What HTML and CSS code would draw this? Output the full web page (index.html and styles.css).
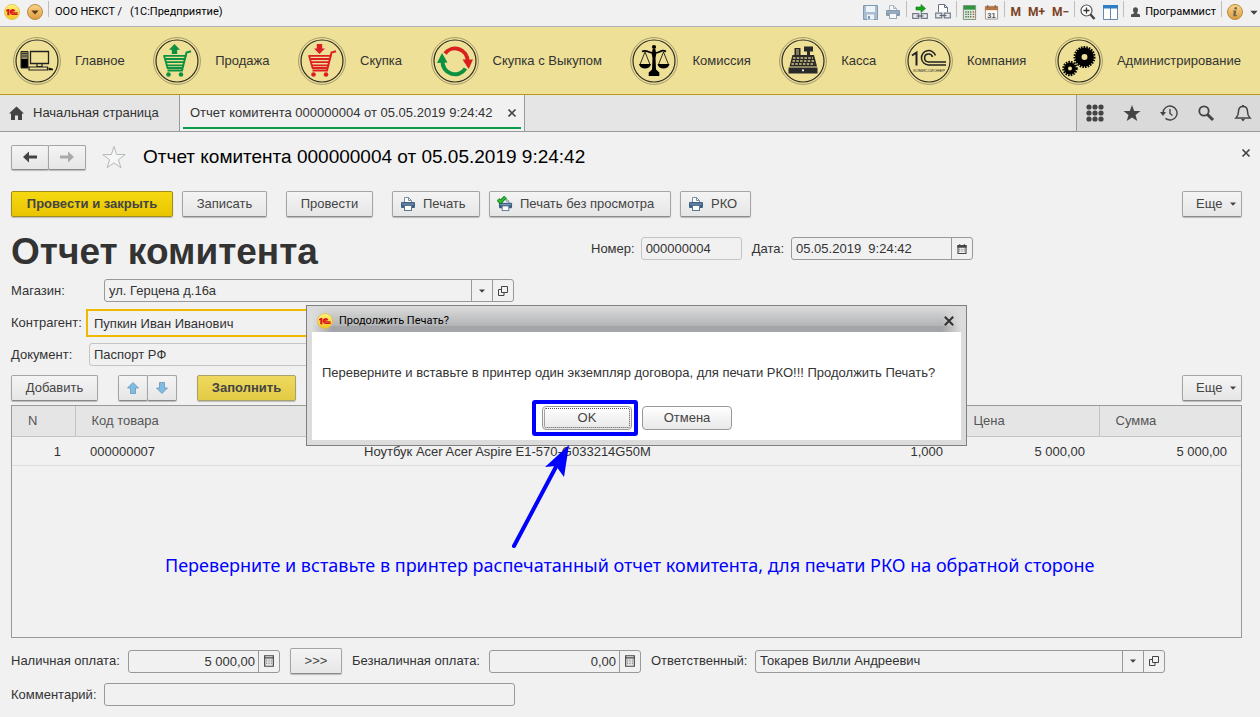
FILE: index.html
```html
<!DOCTYPE html>
<html lang="ru">
<head>
<meta charset="utf-8">
<meta name="viewport" content="width=device-width, initial-scale=1">
<title>ООО НЕКСТ / (1С:Предприятие)</title>
<link rel="stylesheet" href="styles.css">
</head>
<body>
<svg class="defs" aria-hidden="true">
  <defs>
    <linearGradient id="g-yellow" x1="0" y1="0" x2="0" y2="1"><stop offset="0" stop-color="#fff27a"/><stop offset="1" stop-color="#f3c623"/></linearGradient>
    <linearGradient id="g-orange" x1="0" y1="0" x2="0" y2="1"><stop offset="0" stop-color="#fbd58c"/><stop offset="1" stop-color="#dd9a3d"/></linearGradient>
    <symbol id="logo" viewBox="0 0 16 16">
      <circle cx="8" cy="8" r="7.6" fill="url(#g-yellow)" stroke="#dcb84a" stroke-width=".7"/>
      <path d="M2 6.3 3.8 5h1.600v6.200H3.300V7L2 7.600z" fill="#d8141c"/>
      <path d="M10.800 7.200A2.300 2.300 0 1 0 8.600 10.300H13.600M9.700 7.500a1 1 0 1 0-1 1.300h4.900" fill="none" stroke="#d8141c" stroke-width="1.300"/>
    </symbol>
    <symbol id="ring" viewBox="0 0 48 48">
      <circle cx="24" cy="24" r="23.400" fill="none" stroke="#8f8865" stroke-width=".8"/>
      <circle cx="24" cy="24" r="21" fill="none" stroke="#2e2c22" stroke-width="1.200"/>
    </symbol>
    <symbol id="cart" viewBox="0 0 48 48">
      <path d="M38 14.200 33.500 15.500 29 33.500H14.500" fill="none" stroke="currentColor" stroke-width="2"/>
      <path d="M10.500 18.800H33.500M11.500 22H32.500M12.500 25.200H31.500M13.500 28.400H30.500M11 18.500 14.600 31H30" fill="none" stroke="currentColor" stroke-width="1.800"/>
      <circle cx="15.500" cy="37.500" r="2.300" fill="currentColor"/><circle cx="28" cy="37.500" r="2.300" fill="currentColor"/>
    </symbol>
    <symbol id="printer" viewBox="0 0 16 16">
      <path d="M4.500 6.500v-5h4l3 3v2M8.500 1.500v3h3" fill="#fff" stroke="#7c8f9f"/>
      <rect x="1" y="6" width="14" height="6" rx="1" fill="#3f6184"/>
      <path d="M2 8h12" stroke="#7e9dba"/>
      <rect x="4.500" y="9.500" width="7" height="5" fill="#fff" stroke="#5b7690"/>
    </symbol>
    <symbol id="calc" viewBox="0 0 11 13">
      <path d="M.75.75h9.500v11.500H.75zM.75 3h9.500" fill="none" stroke="#444" stroke-width="1.300"/>
      <path d="M2.500 5.500h6M2.500 7.500h6M2.500 9.500h6" stroke="#444" stroke-dasharray="1 1.500"/>
    </symbol>
    <symbol id="caret" viewBox="0 0 6 4"><path d="M0 .5h6L3 3.800z" fill="#444"/></symbol>
    <symbol id="popout" viewBox="0 0 10 10"><path d="M3.500.5h6v6h-6zM3 3.500H.5v6h5.500V7" fill="none" stroke="#444"/></symbol>
    <symbol id="cross" viewBox="0 0 10 10"><path d="m1.500 1.500 7 7m0-7-7 7" stroke="currentColor" stroke-width="1.700"/></symbol>
  </defs>
</svg>

<header class="titlebar">
  <svg class="i16" role="img" aria-label="1С"><use href="#logo"/></svg>
  <button class="plain menu-btn" type="button" aria-label="Меню">
    <svg class="i16" viewBox="0 0 16 16"><circle cx="8" cy="8" r="7.500" fill="url(#g-orange)" stroke="#b88a45"/><path d="M4.300 6.500h7.400L8 10.500z" fill="#5c3b14"/></svg>
  </button>
  <span class="sep"></span>
  <span class="app-title"><span>ООО НЕКСТ /</span><span>(1С:Предприятие)</span></span>
  <div class="tools">
    <button class="plain" type="button" aria-label="Сохранить"><svg class="i15" viewBox="0 0 15 15"><path d="M.5.500h14v14H.500z" fill="#a9bed1" stroke="#7f9ab3"/><path d="M3 1h9v6H3zM4 9.500h7v5H4z" fill="#eef3f7"/><path d="M5 11h2v3H5z" fill="#7f9ab3"/></svg></button>
    <button class="plain faded" type="button" aria-label="Печать"><svg class="i16"><use href="#printer"/></svg></button>
    <span class="sep"></span>
    <button class="plain" type="button" aria-label="Получить ссылку"><svg class="i16" viewBox="0 0 16 16"><path d="M4 3h5V.5L13.500 4.500 9 8.500V6H4z" fill="#18a51e" stroke="#0c7412" stroke-width=".6"/><path d="M.7 9.700h6v4.600h-6zM9.300 9.700h6v4.600h-6z" fill="#eee" stroke="#727c87" stroke-width="1.200"/><path d="M4.500 12h7" stroke="#5f6b78" stroke-width="1.300"/></svg></button>
    <button class="plain" type="button" aria-label="Перейти по ссылке"><svg class="i16" viewBox="0 0 16 16"><path d="M3.500 8V.5h6l3 3V8M9.500.5v3h3" fill="#fff" stroke="#66727f"/><path d="M.7 9.200h6v4.600h-6zM9.300 9.200h6v4.600h-6z" fill="#eee" stroke="#727c87" stroke-width="1.200"/><path d="M4.500 11.500h7" stroke="#5f6b78" stroke-width="1.300"/></svg></button>
    <span class="sep"></span>
    <button class="plain" type="button" aria-label="Калькулятор"><svg class="i15" viewBox="0 0 15 16"><path d="M1 .5h13v15H1z" fill="#dfe8df" stroke="#789078"/><path d="M1.500 1h12v4h-12z" fill="#2f9440"/><path d="M3 7.500h7M3 10h7M3 12.500h7" stroke="#467d4b" stroke-width="1.500" stroke-dasharray="1.500 1"/><path d="M11 7.500h1.500M11 10h1.500M11 12.500h1.500" stroke="#c94e35" stroke-width="1.500"/></svg></button>
    <button class="plain" type="button" aria-label="Календарь"><svg class="i15" viewBox="0 0 15 16"><path d="M1 1.500h13v13.500H1z" fill="#fafafa" stroke="#9d9087"/><path d="M.5 1.500h14v4H.5z" fill="#b77643"/><path d="M3.500 0v3M11.500 0v3" stroke="#765036"/><text x="7.500" y="13.500" class="cal-num">31</text></svg></button>
    <span class="sep"></span>
    <button class="plain mem" type="button">M</button>
    <button class="plain mem" type="button">M+</button>
    <button class="plain mem" type="button">M−</button>
    <span class="sep"></span>
    <button class="plain" type="button" aria-label="Масштаб"><svg class="i16" viewBox="0 0 16 16"><circle cx="6.500" cy="6.500" r="5.500" fill="#fff" stroke="#555" stroke-width="1.200"/><path d="M3.500 6.500h6m-3-3v6" stroke="#333" stroke-width="1.300"/><path d="m10.500 10.500 4 4.500" stroke="#444" stroke-width="2.500"/></svg></button>
    <button class="plain" type="button" aria-label="Панели"><svg class="i15" viewBox="0 0 15 15"><path d="M.5.500h14v14H.500zM7.500 1v14" fill="#fff" stroke="#6888a5"/><path d="M0 0h15v3.500H0z" fill="#2f7fc4"/></svg></button>
    <span class="sep"></span>
    <button class="plain user" type="button"><svg class="i11" viewBox="0 0 11 12"><path d="M3 4a2.500 2.800 0 0 1 5 0c0 1.800-1 2.200-1 3.500l3 1V11H1V8.500L4 7.500C4 6.200 3 5.800 3 4z" fill="#505050"/></svg>Программист</button>
    <span class="sep"></span>
    <button class="plain" type="button" aria-label="Информация"><svg class="i16" viewBox="0 0 16 16"><circle cx="8" cy="8" r="7.500" fill="url(#g-orange)" stroke="#b88a45"/><circle cx="8.700" cy="4.200" r="1.300" fill="#6b6658"/><path d="M6.300 6.500h3L8.600 11h1.200v1.300H6.300V11l.5-3.300h-.7z" fill="#6b6658"/></svg></button>
    <button class="plain more-tools" type="button" aria-label="Ещё"><svg class="car7" viewBox="0 0 6 4"><use href="#caret"/></svg></button>
  </div>
</header>

<nav class="sections">
  <a href="#"><svg class="i48" viewBox="0 0 48 48"><use href="#ring"/><path d="M8 14.500h7V31H8z" fill="#8e875c"/><path d="M8 22h7v9H8z" fill="#000"/><path d="M8 14.500h7V31H8z" fill="none" stroke="#222"/><path d="M9 16.500h5M9 19h5" stroke="#333"/><path d="M17.500 14.500h18v12h-18z" fill="none" stroke="#222" stroke-width="1.300"/><path d="M24 27v2.500h5V27M16 30h18.500v3H16z" fill="none" stroke="#222" stroke-width="1.200"/><path d="m35.500 30.500 4.500 1.200v1.600h-4.500z" fill="#111"/></svg>Главное</a>
  <a href="#"><svg class="i48 green" viewBox="0 0 48 48"><use href="#ring"/><path d="m21.500 7 5.500 5.800h-2.800v4.200h-5.400v-4.200H16z" fill="currentColor"/><use href="#cart"/></svg>Продажа</a>
  <a href="#"><svg class="i48 red" viewBox="0 0 48 48"><use href="#ring"/><path d="m21.500 17 5.500-5.600h-2.800V7h-5.400v4.400H16z" fill="currentColor"/><use href="#cart"/></svg>Скупка</a>
  <a href="#"><svg class="i48" viewBox="0 0 48 48"><use href="#ring"/><path d="M14 16.500A12.500 12.500 0 0 1 36.500 24" fill="none" stroke="#d8201f" stroke-width="4"/><path d="m31.500 22.500 10.500 0-4.300 9.500z" fill="#d8201f"/><path d="M34.500 31.500A12.500 12.500 0 0 1 11.500 24" fill="none" stroke="#0c9140" stroke-width="4"/><path d="m6 26 10.500-.5L11 16z" fill="#0c9140"/></svg>Скупка с Выкупом</a>
  <a href="#"><svg class="i48" viewBox="0 0 48 48"><use href="#ring"/><circle cx="24" cy="10" r="2.100"/><path d="M22.700 12h2.600l1 5-.8 4 .5 11.500 3.300 3v3.500H18.700V35.500l3.300-3 .5-11.500-.8-4z"/><path d="M12 14.500c3-1.500 5-.5 7 .5s7 1.500 10 0 4-2 7-.5" fill="none" stroke="#000" stroke-width="1.800"/><path d="M15 15 10 27.500M15 15l5 12.500M33.500 15l-5 12.500M33.500 15l5 12.500" stroke="#000" stroke-width=".8"/><path d="M9 27h12c-1 6-11 6-12 0zM27.500 27h12c-1 6-11 6-12 0z"/></svg>Комиссия</a>
  <a href="#"><svg class="i48" viewBox="0 0 48 48"><use href="#ring"/><path d="M9.500 30.500h29V36.500h-29z" fill="#292929"/><path d="m13.500 18 21.500 0 3 11.500H10.500z" fill="#292929"/><path d="M25 9.500h9v5h-3v4h-3v-4h-3zM15.500 11h6v8h-6z" fill="#292929"/><path d="M17 13h3M17 15h3M17 17h3" stroke="#eee096" stroke-width=".9"/><path d="M14 21h20M13.500 24h21.500M12.500 27h23" stroke="#d7ca87" stroke-width="1.300" stroke-dasharray="2.500 1.300"/><circle cx="24" cy="33.300" r="1.100" fill="#eee"/></svg>Касса</a>
  <a href="#"><svg class="i48" viewBox="0 0 48 48"><use href="#ring"/><path d="m7 18.500 4.500-3v13" fill="none" stroke="#222" stroke-width="2"/><path d="M30.500 18.500A7.200 7.200 0 1 0 23.500 28H41M27.500 20a4 4 0 1 0-4 5H41" fill="none" stroke="#222" stroke-width="1.500"/><text x="24" y="35" class="tiny">КОМИССИОНЕР</text></svg>Компания</a>
  <a href="#"><svg class="i48" viewBox="0 0 48 48"><use href="#ring"/><circle cx="29.500" cy="20" r="10" fill="none" stroke="#000" stroke-width="2" stroke-dasharray="1.600 1.100"/><circle cx="29.500" cy="20" r="6.200" fill="none" stroke="#000" stroke-width="6.500"/><circle cx="15" cy="31.500" r="6.700" fill="none" stroke="#000" stroke-width="2" stroke-dasharray="1.600 1.100"/><circle cx="15" cy="31.500" r="4" fill="none" stroke="#000" stroke-width="4"/></svg>Администрирование</a>
</nav>

<div class="tabs">
  <a class="tab home" href="#"><svg class="i15" viewBox="0 0 15 14"><path d="M7.500 0 15 7h-2v6.500H9V9H6v4.500H2V7H0z" fill="#444"/></svg>Начальная страница</a>
  <div class="tab active"><a href="#">Отчет комитента 000000004 от 05.05.2019 9:24:42</a><button class="plain" type="button" aria-label="Закрыть вкладку"><svg class="i10"><use href="#cross"/></svg></button></div>
  <div class="tab-tools">
    <button class="plain" type="button" aria-label="Функции"><svg class="i18" viewBox="0 0 18 18" fill="#444"><circle cx="3" cy="3" r="2.600"/><circle cx="9" cy="3" r="2.600"/><circle cx="15" cy="3" r="2.600"/><circle cx="3" cy="9" r="2.600"/><circle cx="9" cy="9" r="2.600"/><circle cx="15" cy="9" r="2.600"/><circle cx="3" cy="15" r="2.600"/><circle cx="9" cy="15" r="2.600"/><circle cx="15" cy="15" r="2.600"/></svg></button>
    <button class="plain" type="button" aria-label="Избранное"><svg class="i18" viewBox="0 0 18 18"><path d="m9 1 2.200 5.900 6.300.2-5 3.900 1.800 6.100L9 13.600l-5.300 3.500L5.500 11 .5 7.100l6.300-.2z" fill="#444"/></svg></button>
    <button class="plain" type="button" aria-label="История"><svg class="i18" viewBox="0 0 18 18"><path d="M3 9a7 7 0 1 1 2.500 5.400M10 5v4.500l2.500 2" fill="none" stroke="#444" stroke-width="1.400"/><path d="M0 8h6l-3 4z" fill="#444"/></svg></button>
    <button class="plain" type="button" aria-label="Поиск"><svg class="i18" viewBox="0 0 18 18"><circle cx="7" cy="7" r="4.700" fill="none" stroke="#444" stroke-width="1.800"/><path d="m10.500 10.500 5.500 5.500" stroke="#444" stroke-width="3"/></svg></button>
    <button class="plain" type="button" aria-label="Оповещения"><svg class="i18" viewBox="0 0 18 18"><path d="M9 2.500c-3 0-4.500 2-4.500 5 0 3.500-1 5-2.500 6.500h14c-1.500-1.500-2.500-3-2.500-6.500 0-3-1.500-5-4.500-5z" fill="none" stroke="#444" stroke-width="1.500"/><path d="M8 1h2v2H8zM7 15h4l-2 2.500z" fill="#444"/></svg></button>
  </div>
</div>

<main class="form">
  <div class="form-head">
    <div class="pair">
      <button class="btn arrow" type="button" aria-label="Назад"><svg class="i14" viewBox="0 0 14 12"><path d="M0 6 6 .5V4.500h8v3H6v4z" fill="#444"/></svg></button>
      <button class="btn arrow" type="button" aria-label="Вперед"><svg class="i14" viewBox="0 0 14 12"><path d="M14 6 8 .5V4.500H0v3h8v4z" fill="#aaa"/></svg></button>
    </div>
    <button class="plain star" type="button" aria-label="В избранное"><svg class="i24" viewBox="0 0 24 24"><path d="m12 1.500 2.700 8 8.500.1-6.800 5.100 2.500 8L12 17.900 5.100 22.700l2.500-8L.8 9.600l8.500-.1z" fill="#f6f6f6" stroke="#b3b9bd"/></svg></button>
    <h2>Отчет комитента 000000004 от 05.05.2019 9:24:42</h2>
    <button class="plain form-close" type="button" aria-label="Закрыть"><svg class="i10"><use href="#cross"/></svg></button>
  </div>

  <div class="commands">
    <button class="btn primary w-post" type="button">Провести и закрыть</button>
    <button class="btn w-save" type="button">Записать</button>
    <button class="btn w-add gap-l" type="button">Провести</button>
    <button class="btn ic w-print gap-l" type="button"><svg class="i16"><use href="#printer"/></svg>Печать</button>
    <button class="btn ic w-direct" type="button"><svg class="i16" viewBox="0 0 16 16"><use href="#printer" x="1" y="1" width="15" height="15"/><path d="m1 3.500 2.500 2.500L8.500 1" fill="none" stroke="#0d6a13" stroke-width="3.600"/><path d="m1 3.500 2.500 2.500L8.500 1" fill="none" stroke="#2fc22f" stroke-width="2"/></svg>Печать без просмотра</button>
    <button class="btn ic w-rko" type="button"><svg class="i16"><use href="#printer"/></svg>РКО</button>
    <button class="btn more" type="button">Еще<svg class="car"><use href="#caret"/></svg></button>
  </div>

  <div class="heading">
    <h1>Отчет комитента</h1>
    <label for="num">Номер:</label>
    <input id="num" class="field readonly num" value="000000004" readonly>
    <label for="date">Дата:</label>
    <div class="combo date"><input id="date" value="05.05.2019  9:24:42"><button class="plain" type="button" aria-label="Выбрать дату"><svg class="i10" viewBox="0 0 10 11"><path d="M.6 1.800h8.800v8.600H.6z" fill="none" stroke="#444" stroke-width="1.200"/><path d="M0 1h10v3H0z" fill="#444"/><path d="M2.500 0v2M7.500 0v2" stroke="#444"/><path d="M2 5.800h6M2 7.800h6" stroke="#444" stroke-dasharray="1 1.500"/></svg></button></div>
  </div>

  <div class="row shop">
    <label for="shop">Магазин:</label>
    <div class="combo wide">
      <div class="pick"><select id="shop"><option>ул. Герцена д.16а</option></select><span class="drop"><svg class="car"><use href="#caret"/></svg></span></div>
      <button class="plain" type="button" aria-label="Открыть магазин"><svg class="i10"><use href="#popout"/></svg></button>
    </div>
  </div>
  <div class="row agent">
    <label for="agent">Контрагент:</label>
    <input id="agent" class="focus" value="Пупкин Иван Иванович">
  </div>
  <div class="row doc">
    <label for="doc">Документ:</label>
    <input id="doc" class="field readonly" value="Паспорт РФ" readonly>
  </div>

  <div class="table-tools">
    <button class="btn w-add" type="button">Добавить</button>
    <div class="pair small">
      <button class="btn arrow" type="button" aria-label="Вверх"><svg class="i12" viewBox="0 0 12 12"><path d="m6 .5 5.500 5.500H8.500v5.500h-5V6H.5z" fill="#80bde4" stroke="#6797b8" stroke-width=".8"/></svg></button>
      <button class="btn arrow" type="button" aria-label="Вниз"><svg class="i12" viewBox="0 0 12 12"><path d="m6 11.500 5.500-5.500H8.500V.5h-5V6H.5z" fill="#80bde4" stroke="#6797b8" stroke-width=".8"/></svg></button>
    </div>
    <button class="btn fill" type="button">Заполнить</button>
    <button class="btn more" type="button">Еще<svg class="car"><use href="#caret"/></svg></button>
  </div>

  <div class="grid-box">
    <table>
      <colgroup><col class="c-n"><col class="c-code"><col><col class="c-qty"><col class="c-price"><col class="c-price"></colgroup>
      <thead><tr><th>N</th><th>Код товара</th><th></th><th></th><th>Цена</th><th>Сумма</th></tr></thead>
      <tbody><tr><td class="r">1</td><td>000000007</td><td>Ноутбук Acer Acer Aspire E1-570-G033214G50M</td><td class="r">1,000</td><td class="r">5 000,00</td><td class="r">5 000,00</td></tr></tbody>
    </table>
  </div>

  <div class="row pay">
    <label class="l-cash" for="cash">Наличная оплата:</label>
    <div class="combo money"><input id="cash" value="5 000,00"><button class="plain" type="button" aria-label="Калькулятор наличной оплаты"><svg class="i10x12"><use href="#calc"/></svg></button></div>
    <button class="btn transfer" type="button">&gt;&gt;&gt;</button>
    <label class="l-card" for="card">Безналичная оплата:</label>
    <div class="combo money"><input id="card" value="0,00"><button class="plain" type="button" aria-label="Калькулятор безналичной оплаты"><svg class="i10x12"><use href="#calc"/></svg></button></div>
    <label class="l-resp" for="resp">Ответственный:</label>
    <div class="combo wide">
      <div class="pick"><select id="resp"><option>Токарев Вилли Андреевич</option></select><span class="drop"><svg class="car"><use href="#caret"/></svg></span></div>
      <button class="plain" type="button" aria-label="Открыть ответственного"><svg class="i10"><use href="#popout"/></svg></button>
    </div>
  </div>
  <div class="row comment">
    <label for="note">Комментарий:</label>
    <input id="note" class="field">
  </div>
</main>

<div class="dialog" role="dialog" aria-labelledby="dlg-title">
  <div class="dlg-head">
    <svg class="i16"><use href="#logo"/></svg>
    <span id="dlg-title">Продолжить Печать?</span>
    <button class="plain" type="button" aria-label="Закрыть окно"><svg class="i12"><use href="#cross"/></svg></button>
  </div>
  <div class="dlg-body">
    <p>Переверните и вставьте в принтер один экземпляр договора, для печати РКО!!! Продолжить Печать?</p>
    <div class="dlg-actions">
      <span class="marker"><button class="dlg-btn default" type="button">OK</button></span>
      <button class="dlg-btn" type="button">Отмена</button>
    </div>
  </div>
</div>
<svg class="pointer" viewBox="0 0 60 104" aria-hidden="true"><path d="M3 101 47 18" stroke="#00f" stroke-width="4" stroke-linecap="round"/><path d="M58 0 34 22l11-1 8 11z" fill="#00f"/></svg>
<p class="callout">Переверните и вставьте в принтер распечатанный отчет комитента, для печати РКО на обратной стороне</p>
</body>
</html>
```
FILE: styles.css
```css
* { box-sizing: border-box; }
html { height: 100%; }
body {
  margin: 0;
  min-height: 100%;
  display: flex;
  flex-direction: column;
  position: relative;
  background: #f1f1f1;
  color: #333;
  font: 13px/16px "Liberation Sans", Arial, sans-serif;
}
h1, h2, p { margin: 0; }
a { color: inherit; text-decoration: none; }
button, input, select { font: inherit; color: inherit; }
svg { display: block; flex: none; }
.defs { position: absolute; width: 0; height: 0; }
.i10 { width: 10px; height: 10px; }
.i10x12 { width: 10px; height: 12px; }
.i11 { width: 11px; height: 12px; }
.i12 { width: 12px; height: 12px; }
.i14 { width: 14px; height: 12px; }
.i15 { width: 15px; height: 15px; }
.i16 { width: 16px; height: 16px; }
.i18 { width: 18px; height: 18px; }
.i24 { width: 24px; height: 24px; }
.i48 { width: 48px; height: 48px; }
.car { width: 6px; height: 4px; }
.car7 { width: 8px; height: 5px; }
.green { color: #0c9140; }
.red { color: #dc1f22; }
.plain { padding: 0; border: 0; background: none; display: flex; align-items: center; justify-content: center; }

/* window title */
.titlebar {
  height: 27px;
  display: flex;
  align-items: center;
  padding: 0 2px 2px 4px;
  border-bottom: 1px solid #b1b1b1;
  color: #000;
  font: 11px/16px Roboto, "Liberation Sans", sans-serif;
}
.menu-btn { margin: 0 5px 0 7px; }
.sep { width: 1px; height: 16px; margin-bottom: 6px; background: #bdbdbd; }
.app-title { display: flex; gap: 8px; margin-left: 6px; }
.tools { margin-left: auto; display: flex; align-items: center; gap: 7px; }
.tools .sep { margin-left: -2px; margin-right: -2px; }
.faded { opacity: .6; }
.mem { color: #7a4425; font-size: 12px; font-weight: bold; }
.user { gap: 4px; padding-left: 1px; }
.cal-num { font: bold 8px "Liberation Sans", sans-serif; text-anchor: middle; fill: #555; }

/* sections */
.sections {
  height: 68px;
  display: flex;
  align-items: center;
  justify-content: space-between;
  padding: 0 19px 0 13px;
  background: #eee096;
  border-bottom: 1px solid #b89a1a;
}
.sections a { display: flex; align-items: center; gap: 14px; color: #333; white-space: nowrap; }
.tiny { font: 4px "Liberation Sans", sans-serif; text-anchor: middle; fill: #222; }

/* tabs */
.tabs { height: 37px; display: flex; background: #e5e5e5; border-bottom: 1px solid #999; }
.tab { display: flex; align-items: center; border-right: 1px solid #999; white-space: nowrap; }
.home { width: 180px; gap: 9px; padding-left: 9px; }
.active { width: 345px; position: relative; padding: 0 7px 0 10px; justify-content: space-between; background: #f1f1f1; }
.active::after { content: ""; position: absolute; left: 3px; right: 3px; bottom: 2px; height: 2px; background: #0c9b48; }
.tab-tools { margin-left: auto; display: flex; align-items: center; gap: 19px; padding: 0 8px 0 9px; background: #dadada; border-left: 1px solid #999; }
.tab-tools .plain, .tab .plain, .form-close { color: #444; }

/* form */
.form { flex: 1; display: flex; flex-direction: column; padding: 12px 18px 11px 11px; }
.form-head { display: flex; align-items: center; height: 26px; }
.btn {
  height: 26px;
  display: flex;
  align-items: center;
  justify-content: center;
  padding: 0 13px;
  border: 1px solid #a5a5a5;
  border-bottom-color: #8a8a8a;
  border-radius: 2px;
  background: linear-gradient(#f4f4f4, #e6e6e6);
  box-shadow: 0 1px 1px #bbb;
  color: #444;
  white-space: nowrap;
}
.pair { display: flex; }
.arrow { width: 38px; height: 25px; padding: 0; }
.arrow + .arrow { margin-left: -1px; }
.small .arrow { width: 30px; height: 26px; }
.star { margin: 0 17px 0 16px; }
.form-head h2 { color: #000; font-size: 19px; line-height: 24px; font-weight: normal; white-space: nowrap; }
.form-close { margin: 0 -9px 8px auto; }
.commands { display: flex; gap: 9px; margin-top: 21px; }
.gap-l { margin-left: 10px; }
.primary { font-weight: bold; background: linear-gradient(#f6d911, #e8c400); border-color: #a08c1c; }
.w-post { width: 162px; }
.w-save { width: 85px; }
.w-add { width: 87px; }
.ic { gap: 7px; padding: 0 7px; justify-content: flex-start; }
.w-print { width: 88px; }
.w-direct { width: 182px; }
.w-rko { width: 71px; }
.more { width: 60px; margin-left: auto; padding: 0 5px 0 13px; justify-content: space-between; }
.heading { display: flex; align-items: center; margin-top: 13px; padding-bottom: 7px; height: 44px; }
h1 { width: 580px; font-size: 37px; line-height: 37px; white-space: nowrap; padding-top: 5px; }
.field, .combo { height: 23px; border: 1px solid #999; border-radius: 3px; background: #f1f1f1; }
.readonly { border-color: #c4c4c4; }
.field { padding: 0 4px; }
.num { width: 101px; margin: 0 10px 0 6px; }
.combo { display: flex; overflow: hidden; }
.combo input, .combo select { flex: 1; min-width: 0; width: 100%; height: 21px; padding: 0 4px; border: 0; background: none; outline: 0; white-space: pre; }
.combo > .plain { width: 21px; border-left: 1px solid #999; }
.date { width: 182px; margin-left: 7px; }
.pick { flex: 1; display: grid; grid-template-columns: 1fr 21px; }
.pick select { grid-area: 1 / 1 / 2 / 3; appearance: none; }
.drop { grid-area: 1 / 2; border-left: 1px solid #999; display: flex; align-items: center; justify-content: center; pointer-events: none; }
.wide { width: 410px; }
.row { display: flex; align-items: center; }
.row label, .heading label { white-space: nowrap; }
.shop { margin-top: 5px; }
.shop label { width: 93px; }
.agent { margin-top: 7px; }
.agent label { width: 75px; }
.focus { width: 428px; height: 28px; padding: 0 6px; border: 2px solid #f0b900; background: #f1f1f1; outline: 0; }
.doc { margin-top: 6px; }
.doc label { width: 78px; }
.doc .field { width: 425px; }
.table-tools { display: flex; gap: 20px; margin-top: 9px; }
.fill { width: 99px; font-weight: bold; background: linear-gradient(#efd95e, #e3cb45); border-color: #a9a16c; }
.grid-box { flex: 1; margin-top: 4px; border: 1px solid #999; }
table { width: 100%; border-collapse: collapse; table-layout: fixed; }
th { height: 30px; padding: 0 16px; text-align: left; font-weight: normal; color: #555; background: #e5e5e5; border-right: 1px solid #c4c4c4; border-bottom: 1px solid #c4c4c4; }
th:last-child { border-right: 0; }
td { height: 29px; padding: 2px 14px 0 15px; border-bottom: 1px solid #dcdcdc; white-space: nowrap; }
.r { text-align: right; }
.c-n { width: 63px; }
.c-code { width: 274px; }
.c-qty { width: 120px; }
.c-price { width: 142px; }
.pay { margin-top: 10px; gap: 10px; }
.pay label { margin-right: -4px; }
.l-cash { width: 111px; }
.l-card { width: 131px; }
.l-resp { width: 98px; }
.money { width: 152px; }
.money input { text-align: right; padding: 0 3px; }
.transfer { width: 52px; }
.comment { margin-top: 9px; }
.comment label { width: 93px; }
.comment .field { width: 411px; }

/* confirmation window */
.dialog { position: absolute; left: 306px; top: 305px; width: 661px; padding: 0 5px 5px; border: 1px solid #808080; background: #dcdcdc; }
.dlg-head {
  height: 26px;
  display: flex;
  align-items: center;
  gap: 6px;
  padding: 3px 6px 0 5px;
  background: linear-gradient(90deg, #dcdcdc, transparent 20px, transparent 630px, #dcdcdc), linear-gradient(#dcdcdc 0, #b4b5b7 75%, #a4a5a8 76%);
  color: #000;
  font: 11px/16px Roboto, "Liberation Sans", sans-serif;
}
.dlg-head .plain { margin-left: auto; color: #333; }
.dlg-body { padding: 33px 10px 4px; background: #fff; }
.dlg-body p { white-space: nowrap; }
.dlg-actions { display: flex; align-items: center; justify-content: center; gap: 4px; margin-top: 19px; padding-right: 9px; }
.marker { padding: 2px 2px 2px 6px; border: 4px solid #00f; border-radius: 3px; }
.dlg-btn { width: 90px; height: 24px; border: 1px solid #999; border-radius: 4px; background: linear-gradient(#fff, #e8e8e8); color: #444; }
.default { display: block; outline: 1px dotted #555; outline-offset: -3px; }
.pointer { position: absolute; left: 511px; top: 445px; width: 60px; height: 104px; }
.callout { position: absolute; left: 165px; top: 553px; color: #00f; font: 18px/24px "Noto Sans", "Open Sans", sans-serif; white-space: nowrap; }
```
